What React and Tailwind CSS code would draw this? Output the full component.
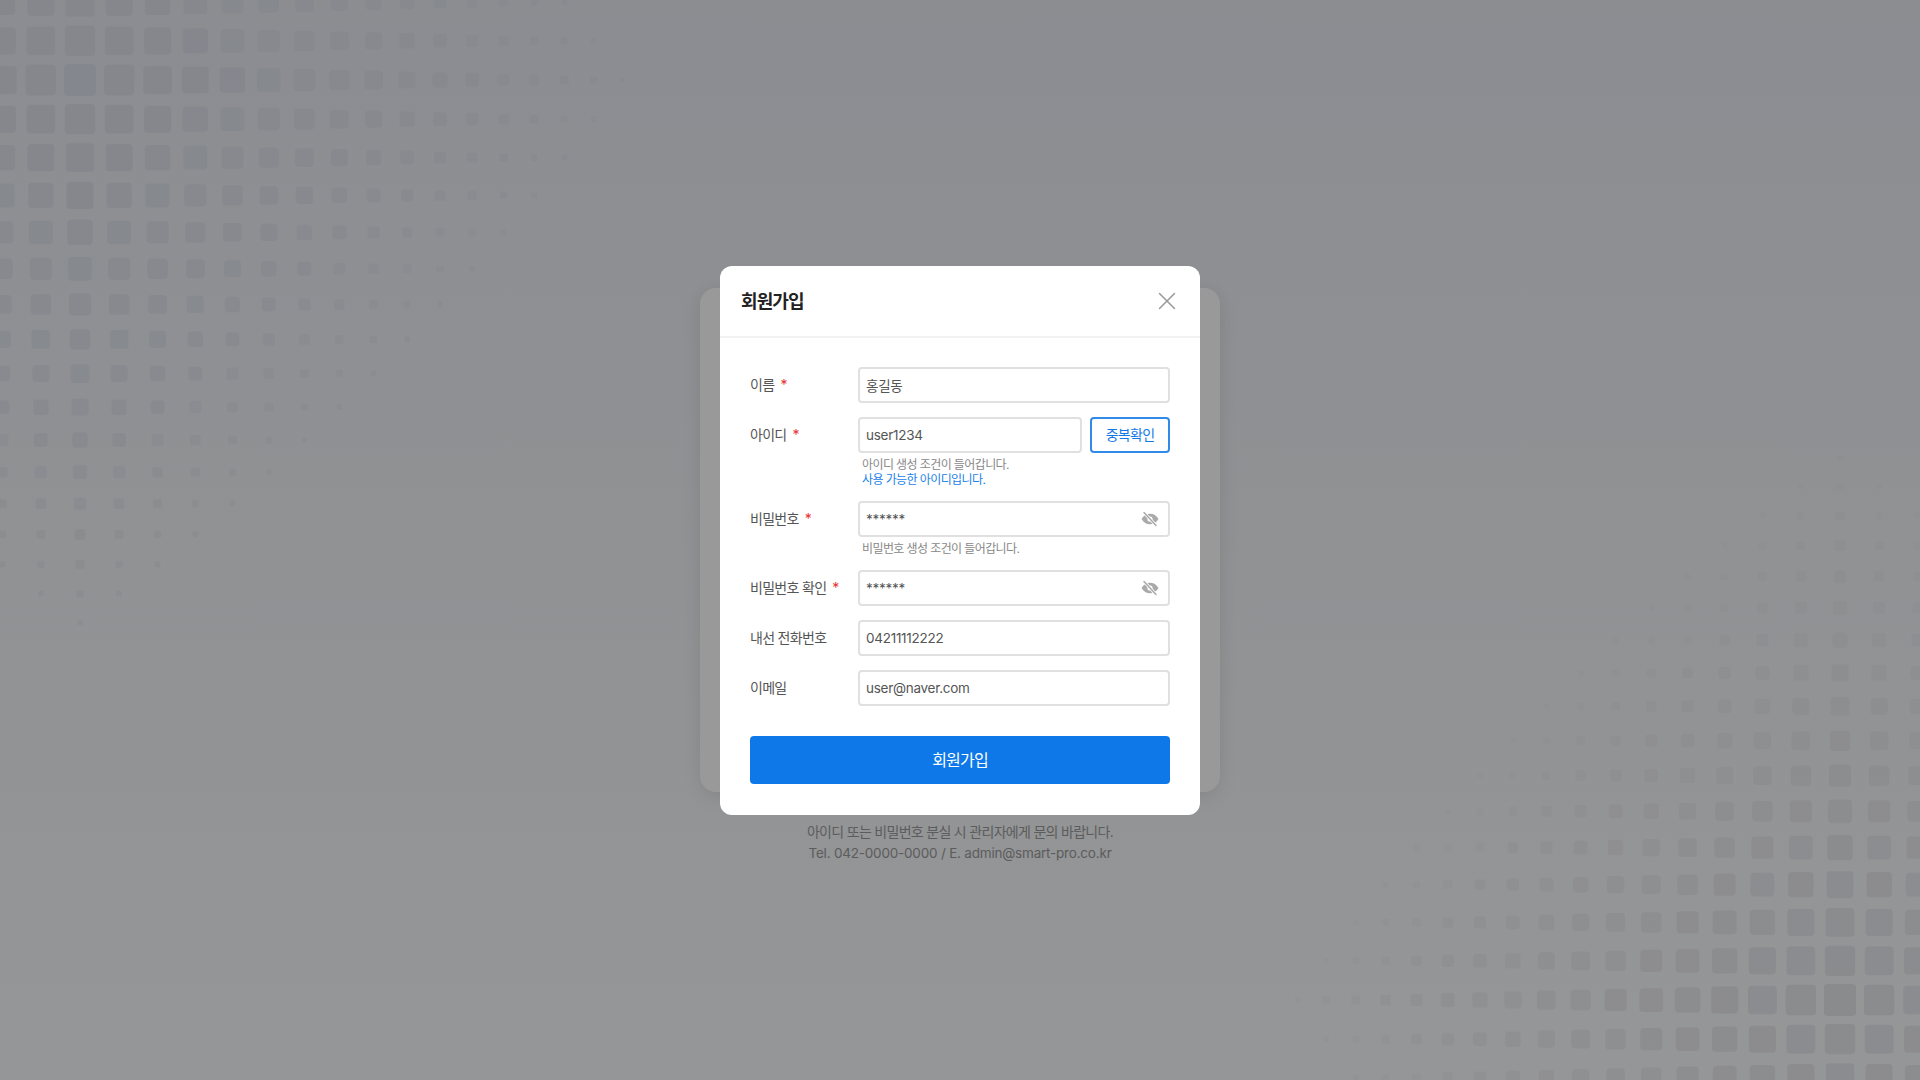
import { useState } from 'react';
import { X } from 'lucide-react';

const fontStack = 'font-[Inter,"Noto_Sans_CJK_KR",sans-serif]';

// 모서리에서 퍼지는 도트 배경 (다이아몬드 형태)
function offset(n) {
  const a = Math.abs(n);
  return Math.sign(n) * (39.5 * a - 0.35 * a * a);
}

function dots(cx, cy, maxOp, minOp) {
  const out = [];
  for (let a = -16; a <= 16; a++) {
    for (let b = -16; b <= 16; b++) {
      const m = Math.abs(a) + Math.abs(b);
      if (m > 16) continue;
      const x = cx + offset(a);
      const y = cy + offset(b);
      if (x < -20 || y < -20 || x > 1940 || y > 1100) continue;
      const size = 32 - 1.65 * m;
      out.push({ x: x - size / 2, y: y - size / 2, size, op: maxOp - ((maxOp - minOp) * m) / 16 });
    }
  }
  return out;
}

function DotBackground() {
  const topLeft = dots(80, 80, 1, 0.4);
  const bottomRight = dots(1840, 1000, 0.9, 0.2);
  return (
    <svg className="absolute inset-0" width="1920" height="1080" viewBox="0 0 1920 1080">
      {topLeft.map((d, i) => (
        <rect key={i} x={d.x} y={d.y} width={d.size} height={d.size} rx={Math.min(4, d.size / 4)} fill="#dde1eb" opacity={d.op} />
      ))}
      {bottomRight.map((d, i) => (
        <rect key={i} x={d.x} y={d.y} width={d.size} height={d.size} rx={Math.min(4, d.size / 4)} fill="#e4e5ea" opacity={d.op} />
      ))}
    </svg>
  );
}

function EyeOff() {
  return (
    <svg width="20" height="20" viewBox="0 0 20 20" fill="none">
      <path d="M1.5 10C3.5 6.5 6.5 4.8 10 4.8S16.5 6.5 18.5 10C16.5 13.5 13.5 15.2 10 15.2S3.5 13.5 1.5 10Z" fill="#aaaaaa" />
      <circle cx="10" cy="10" r="2.6" fill="#ffffff" />
      <path d="M4 3.5L16 16.5" stroke="#ffffff" strokeWidth="3" />
      <path d="M4 3.5L16 16.5" stroke="#aaaaaa" strokeWidth="1.5" strokeLinecap="round" />
    </svg>
  );
}

function Field({ label, required, children }) {
  return (
    <div className="flex">
      <div className="w-[108px] h-9 flex items-center text-sm tracking-[-0.05em] text-[#555555] shrink-0 whitespace-nowrap">
        {label}
        {required && <span className="ml-1.5 text-[#e8312f]">*</span>}
      </div>
      <div className="flex-1 min-w-0">{children}</div>
    </div>
  );
}

function TextInput({ value, eye }) {
  const [val, setVal] = useState(value);
  return (
    <div className="relative flex-1">
      <input
        value={val}
        onChange={(e) => setVal(e.target.value)}
        className="w-full h-9 border-2 border-[#e0e0e0] rounded-[4px] px-1.5 text-[13.5px] tracking-[-0.02em] text-[#555555] outline-none bg-white"
      />
      {eye && (
        <span className="absolute right-2.5 top-2">
          <EyeOff />
        </span>
      )}
    </div>
  );
}

export default function App() {
  return (
    <div className={`relative w-full h-[1080px] overflow-hidden bg-gradient-to-b from-[#e9ebf2] to-[#f9fbfc] ${fontStack}`}>
      <DotBackground />

      {/* 뒤쪽 로그인 화면 */}
      <div className="relative flex flex-col items-center pt-[288px]">
        <div className="w-[520px] h-[504px] bg-white rounded-2xl shadow-[0_4px_20px_rgba(0,0,0,0.1)]"></div>
        <div className="mt-[30px] leading-[22px] text-[#9a9a9a] text-center">
          <p className="text-sm tracking-[-0.05em]">아이디 또는 비밀번호 분실 시 관리자에게 문의 바랍니다.</p>
          <p className="text-[13.5px] tracking-[-0.015em]">Tel. 042-0000-0000 / E. admin@smart-pro.co.kr</p>
        </div>
      </div>

      {/* 회원가입 모달 */}
      <div className="absolute inset-0 bg-black/40 flex items-center justify-center">
        <div className="w-[480px] bg-white rounded-xl">
          <div className="h-[72px] pl-[21px] pr-[18px] pt-[3px] flex items-center justify-between border-b-2 border-[#f3f3f3]">
            <h2 className="text-lg font-bold tracking-[-0.05em] text-[#222222]">회원가입</h2>
            <X size={30} strokeWidth={1.2} className="text-[#999999] -mt-[3px]" />
          </div>
          <div className="px-[30px] pt-[29px] pb-[31px]">
            <div className="flex flex-col gap-3.5">
              <Field label="이름" required>
                <TextInput value="홍길동" />
              </Field>
              <Field label="아이디" required>
                <div className="flex gap-2">
                  <TextInput value="user1234" />
                  <button className="w-20 h-9 border-2 border-[#3189e8] rounded-[4px] text-sm tracking-[-0.05em] text-[#1279e6] bg-white">중복확인</button>
                </div>
                <p className="mt-1 pl-1 text-xs leading-[15px] tracking-[-0.05em] text-[#888888]">아이디 생성 조건이 들어갑니다.</p>
                <p className="pl-1 text-xs leading-[15px] tracking-[-0.05em] text-[#1a82e8]">사용 가능한 아이디입니다.</p>
              </Field>
              <Field label="비밀번호" required>
                <TextInput value="******" eye />
                <p className="mt-1 pl-1 text-xs leading-[15px] tracking-[-0.05em] text-[#888888]">비밀번호 생성 조건이 들어갑니다.</p>
              </Field>
              <Field label="비밀번호 확인" required>
                <TextInput value="******" eye />
              </Field>
              <Field label="내선 전화번호">
                <TextInput value="04211112222" />
              </Field>
              <Field label="이메일">
                <TextInput value="user@naver.com" />
              </Field>
            </div>
            <button className="mt-[30px] w-full h-12 rounded-[4px] bg-[#0e78e8] text-base tracking-[-0.05em] text-white">회원가입</button>
          </div>
        </div>
      </div>
    </div>
  );
}
